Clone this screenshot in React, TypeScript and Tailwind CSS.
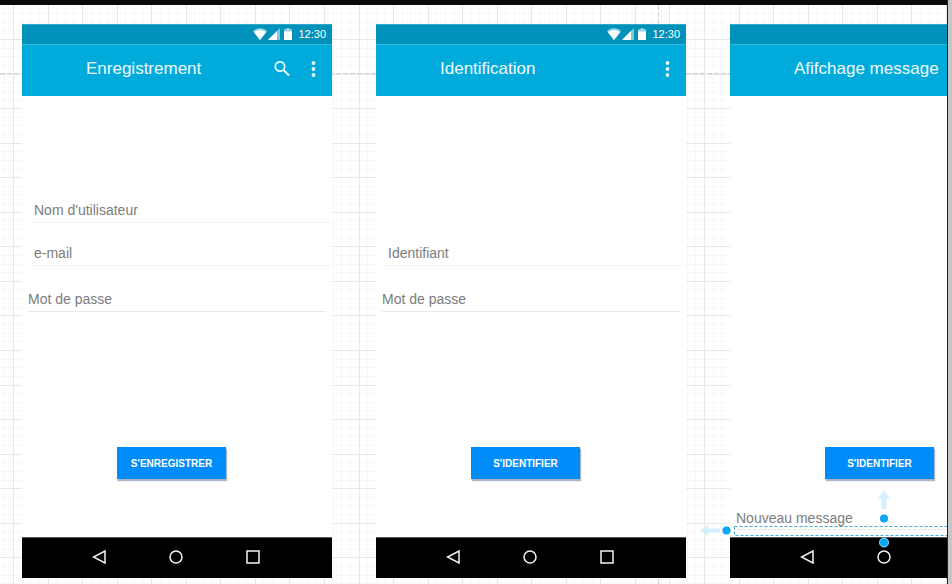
import type { ReactNode } from "react";

const CELL = 34.55;

/* Graph paper behind the mock-ups: four minor cells to each major one. */
function GridPaper() {
  const lines = Array.from({ length: 240 }, (_, i) => i - 4);
  const at = (origin: number, i: number) => Math.round(origin + (i * CELL) / 4) + 0.5;
  const minor = lines.filter((i) => i % 4 !== 0);
  const major = lines.filter((i) => i % 4 === 0);
  const draw = (set: number[]) =>
    set.map((i) => `M${at(13, i)} 0V2100M0 ${at(34, i)}H2100`).join("");
  return (
    <svg aria-hidden="true" className="absolute inset-0 h-full w-full" fill="none">
      <path d={draw(minor)} stroke="#f7f7f7" />
      <path d={draw(major)} stroke="#e8e8e8" />
      <path d="M0 68.5H2100M658.5 0V2100" stroke="#fff" />
      <path d="M0 68.5H2100M658.5 0V2100" stroke="#d0d0d0" strokeDasharray="5 2" />
    </svg>
  );
}

function StatusIcons() {
  return (
    <>
      <svg aria-hidden="true" width="40" height="13" viewBox="0 0 40 13" fill="#fff">
        <path d="M0 3.2C4-.6 10-.6 14 3.2L7 12Z" opacity=".6" />
        <path d="M1 4.200C5 1.6 9 1.6 13 4.200L7 12Z" />
        <path d="M27 0V12H15Z" opacity=".5" />
        <path d="M24 3V12H15Z" />
        <path d="M33.5 0h3v1.2H39V4h-8V1.200h2.500Z" opacity=".6" />
        <path d="M31 3.500h8V12h-8Z" />
      </svg>
      <span className="ml-[5px] text-[11px] text-white">12:30</span>
    </>
  );
}

function SearchButton() {
  return (
    <button type="button" aria-label="Rechercher" className="mr-[21px]">
      <svg width="16" height="16" viewBox="0 0 16 16" fill="none" stroke="#e4f9ff" strokeWidth="1.700">
        <circle cx="6" cy="5.500" r="4.700" />
        <path d="M9.500 9L15 14.500" strokeWidth="2" />
      </svg>
    </button>
  );
}

function MoreButton() {
  return (
    <button type="button" aria-label="Plus d'options">
      <svg width="5" height="16" viewBox="0 0 5 16" fill="#e4f9ff">
        <circle cx="2.500" cy="2" r="1.900" />
        <circle cx="2.500" cy="8" r="1.900" />
        <circle cx="2.500" cy="14" r="1.900" />
      </svg>
    </button>
  );
}

const NAV = [
  { label: "Retour", shape: <path d="M13 1V13L1.500 7Z" /> },
  { label: "Accueil", shape: <circle cx="7" cy="7" r="6" /> },
  { label: "Applications", shape: <path d="M1 1H13V13H1Z" /> },
];

type PhoneProps = { title: string; status?: boolean; actions?: ReactNode; children: ReactNode };

function Phone({ title, status = true, actions, children }: PhoneProps) {
  return (
    <section className="relative flex h-[554px] w-[310px] shrink-0 flex-col bg-white">
      <div className="flex h-[20px] shrink-0 items-center justify-end border-t border-[#2fa9c8] bg-[#0092ba] pr-[6px]">
        {status && <StatusIcons />}
      </div>
      <header className="flex h-[52px] shrink-0 items-center border-t border-[#2fbbe0] bg-[#00abdb] pr-[16px] pb-[3px] pl-[64px]">
        <h2 className="flex-1 text-[17px] whitespace-nowrap text-[#f0fcff]">{title}</h2>
        {actions}
      </header>
      <div className="flex flex-1 flex-col">{children}</div>
      <nav className="flex h-[41px] shrink-0 items-center justify-between border-t border-[#555] bg-black pr-[72px] pb-[2px] pl-[70px]">
        {NAV.map((item) => (
          <button key={item.label} type="button" aria-label={item.label}>
            <svg width="14" height="14" viewBox="0 0 14 14" fill="none" stroke="#f4f4f4" strokeWidth="1.500">
              {item.shape}
            </svg>
          </button>
        ))}
      </nav>
    </section>
  );
}

const INPUT =
  "h-[24px] border-b text-[14px] text-[#757575] outline-none placeholder:text-[#7c7c7c] placeholder:opacity-100";

function Field({ label, type = "text" }: { label: string; type?: string }) {
  return (
    <input
      type={type}
      aria-label={label}
      placeholder={label}
      className={`${INPUT} mb-[19px] ml-[9px] border-[#f3f3f3] pb-[2px] pl-[3px]`}
    />
  );
}

function PasswordField() {
  return (
    <input
      type="password"
      aria-label="Mot de passe"
      placeholder="Mot de passe"
      className={`${INPUT} mx-[6px] mt-[3px] border-[#e9e9e9] pb-[2px]`}
    />
  );
}

function ActionButton({ children }: { children: ReactNode }) {
  return (
    <button
      type="button"
      className="mt-auto mb-[58px] ml-[95px] h-[32px] w-[109px] shrink-0 bg-[#008df9] text-[10px] font-bold whitespace-nowrap text-white shadow-[1px_2px_1px_#a9b4c4]"
    >
      {children}
    </button>
  );
}

/* Selected shape of the editor: dashed outline, anchor points and direction arrows. */
function Selection() {
  return (
    <svg aria-hidden="true" className="absolute bottom-0 left-[-32px]" width="344" height="90" viewBox="0 0 344 90">
      <rect x="36.500" y="38.500" width="300" height="9" fill="none" stroke="#43a8df" strokeDasharray="3 2" />
      <path d="M2 42.500L10 37V40.500H22V44.500H10V48Z" fill="#d5effd" />
      <path d="M186 2L192 11H188.500V21H183.500V11H180Z" fill="#d5effd" />
      <circle cx="28.500" cy="42.500" r="4" fill="#05a7f2" />
      <circle cx="186" cy="30.500" r="4" fill="#05a7f2" />
      <circle cx="186" cy="54.500" r="4.500" fill="#05a7f2" stroke="#a5ddf6" />
    </svg>
  );
}

export default function App() {
  return (
    <div className="flex min-h-screen font-['Liberation_Sans',Arial,sans-serif]">
      <div className="flex min-w-0 flex-1 flex-col">
        <div className="h-[5px] bg-[#0a0a0a]" />
        <main className="relative flex-1 overflow-hidden bg-white">
          <GridPaper />
          <div className="relative flex gap-[44px] pt-[19px] pl-[22px]">
            <Phone
              title="Enregistrement"
              actions={
                <>
                  <SearchButton />
                  <MoreButton />
                </>
              }
            >
              <form className="flex flex-1 flex-col pt-[103px]">
                <Field label="Nom d'utilisateur" />
                <Field label="e-mail" type="email" />
                <PasswordField />
                <ActionButton>S'ENREGISTRER</ActionButton>
              </form>
            </Phone>
            <Phone title="Identification" actions={<MoreButton />}>
              <form className="flex flex-1 flex-col pt-[146px]">
                <Field label="Identifiant" />
                <PasswordField />
                <ActionButton>S'IDENTIFIER</ActionButton>
              </form>
            </Phone>
            <Phone title="Afifchage message" status={false}>
              <form className="relative flex flex-1 flex-col">
                <ActionButton>S'IDENTIFIER</ActionButton>
                <input
                  type="text"
                  aria-label="Nouveau message"
                  placeholder="Nouveau message"
                  className={`${INPUT} absolute inset-x-[6px] bottom-[7px] border-[#ececec]`}
                />
              </form>
              <Selection />
            </Phone>
          </div>
        </main>
      </div>
      <div className="w-[5px] shrink-0 border-l border-[#222] bg-[#c6c6c6]" />
    </div>
  );
}
